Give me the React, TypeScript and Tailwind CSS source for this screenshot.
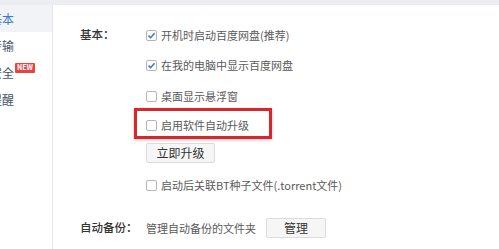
import React from "react";

const font = { fontFamily: '"Noto Sans CJK SC", "Liberation Sans", sans-serif' };

type BoxProps = { checked?: boolean };

const CheckBox = ({ checked }: BoxProps) => (
  <span className="flex items-center justify-center w-[11px] h-[11px] border border-[#b5b5b5] rounded-[2px] bg-white shrink-0">
    {checked ? (
      <svg width="9" height="9" viewBox="0 0 9 9">
        <path d="M1.5 4.6 L3.6 6.7 L7.6 2.2" fill="none" stroke="#3b78c3" strokeWidth="1.6" />
      </svg>
    ) : null}
  </span>
);

const Option = ({ checked, label }: { checked?: boolean; label: string }) => (
  <div className="flex items-center h-[20px] gap-[4px]">
    <CheckBox checked={checked} />
    <span className="text-[11px] text-[#5a5a5a] whitespace-nowrap leading-none">{label}</span>
  </div>
);

const navItems = [
  { name: "基本", active: true },
  { name: "传输" },
  { name: "安全", badge: true },
  { name: "提醒" },
];

export default function App() {
  return (
    <div className="w-[499px] h-[249px] bg-white overflow-hidden flex flex-col" style={font}>
      <div className="h-[5px] bg-[#ebedf0] shrink-0" />
      <div className="flex flex-1">
        <div className="w-[53px] border-r border-[#e6e6e6] overflow-hidden shrink-0">
          {navItems.map((item, index) => (
            <div
              key={index + 1}
              className={
                item.active
                  ? "h-[27px] flex items-center bg-[#f1f3f6]"
                  : "h-[27px] flex items-center"
              }
            >
              <span
                className={
                  item.active
                    ? "ml-[-10px] text-[12px] text-[#3d7ccc] whitespace-nowrap"
                    : "ml-[-10px] text-[12px] text-[#4a5568] whitespace-nowrap"
                }
              >
                {item.name}
              </span>
              {item.badge ? (
                <span className="ml-[1px] mt-[-10px] px-[2px] h-[10px] flex items-center bg-[#e5443f] text-white text-[7px] font-bold leading-none rounded-[1px]">
                  NEW
                </span>
              ) : null}
            </div>
          ))}
        </div>

        <div className="flex-1 pl-[27px] pt-[20px]">
          <div className="flex">
            <div className="w-[66px] h-[20px] flex items-center text-[11.5px] text-[#333] font-medium">基本：</div>
            <div className="flex flex-col">
              <Option checked label="开机时启动百度网盘(推荐)" />
              <div className="mt-[10px]">
                <Option checked label="在我的电脑中显示百度网盘" />
              </div>
              <div className="mt-[11px]">
                <Option label="桌面显示悬浮窗" />
              </div>
              <div className="mt-[2px] ml-[-12px] w-[138px] h-[31px] border-[3px] border-[#d8262c] pl-[9px] pt-[3px] flex items-center shadow-[0_1px_3px_rgba(0,0,0,0.25)]">
                <Option label="启用软件自动升级" />
              </div>
              <button className="mt-[4px] w-[69px] h-[20px] bg-[#f6f6f6] border border-[#dcdcdc] rounded-[2px] text-[12px] text-[#333] flex items-center justify-center">
                立即升级
              </button>
              <div className="mt-[12px]">
                <Option label="启动后关联BT种子文件(.torrent文件)" />
              </div>
            </div>
          </div>

          <div className="flex items-center h-[20px] mt-[23px]">
            <div className="w-[66px] text-[11.5px] text-[#333] font-medium">自动备份：</div>
            <span className="text-[11px] text-[#5a5a5a]">管理自动备份的文件夹</span>
            <button className="ml-[10px] w-[60px] h-[20px] bg-[#f6f6f6] border border-[#dcdcdc] rounded-[2px] text-[12px] text-[#333] flex items-center justify-center">
              管理
            </button>
          </div>
        </div>
      </div>
    </div>
  );
}
